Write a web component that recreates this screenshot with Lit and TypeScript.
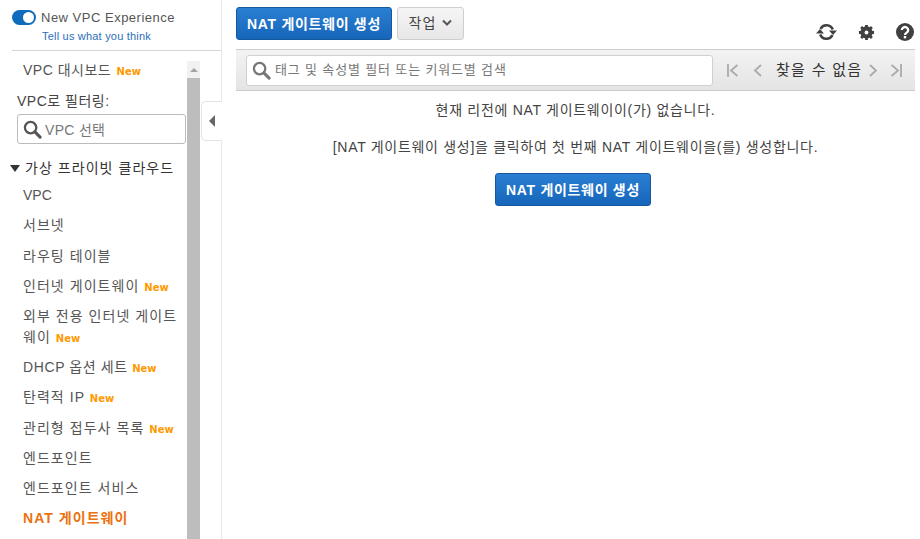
import { css, html, LitElement, nothing } from "lit";
import { customElement } from "lit/decorators.js";

interface NavItem {
  label: string;
  isNew?: boolean;
  kind?: "active" | "plain" | "tight";
}

const NAV_ITEMS: NavItem[] = [
  { label: "VPC", kind: "plain" },
  { label: "서브넷" },
  { label: "라우팅 테이블" },
  { label: "인터넷 게이트웨이", isNew: true },
  { label: "외부 전용 인터넷 게이트웨이", isNew: true },
  { label: "DHCP 옵션 세트", isNew: true, kind: "tight" },
  { label: "탄력적 IP", isNew: true },
  { label: "관리형 접두사 목록", isNew: true },
  { label: "엔드포인트" },
  { label: "엔드포인트 서비스" },
  { label: "NAT 게이트웨이", kind: "active" },
];

const searchIcon = (size: number) => html`<svg
  class="search-icon"
  width=${size}
  height=${size}
  viewBox="0 0 20 20"
  aria-hidden="true"
>
  <circle cx="8" cy="8" r="6" fill="none" stroke="currentColor" stroke-width="2.4" />
  <path d="M12.5 12.5 18 18" stroke="currentColor" stroke-width="3.2" stroke-linecap="round" />
</svg>`;

@customElement("app-root")
export class AppRoot extends LitElement {
  static styles = css`
    :host {
      display: block;
      height: 539px;
      overflow: hidden;
      background: #fff;
      color: #444;
      font-family: "Liberation Sans", "Noto Sans CJK KR", sans-serif;
      font-size: 14px;
    }

    .page {
      display: flex;
      height: 539px;
    }

    .sidebar {
      position: relative;
      flex: none;
      width: 222px;
      box-sizing: border-box;
      border-right: 1px solid #e6e6e6;
      padding-left: 12px;
    }

    .experience {
      height: 51px;
      box-sizing: border-box;
      border-bottom: 1px solid #d5d5d5;
      padding-top: 9px;
    }

    .experience-row {
      display: flex;
      align-items: center;
      gap: 5px;
      height: 17px;
      font-size: 13px;
      letter-spacing: 0.5px;
      color: #555;
    }

    .toggle {
      position: relative;
      flex: none;
      width: 24px;
      height: 15px;
      border-radius: 8px;
      background: #0f6cbd;
    }

    .toggle::after {
      content: "";
      position: absolute;
      right: 2px;
      top: 2px;
      width: 11px;
      height: 11px;
      border-radius: 50%;
      background: #fff;
    }

    .feedback {
      margin: 4px 0 0 30px;
      font-size: 11px;
      letter-spacing: 0.2px;
      color: #2a6ebb;
    }

    .nav-area {
      display: flex;
      height: 488px;
      padding-top: 10px;
      box-sizing: border-box;
    }

    .nav {
      flex: none;
      width: 175px;
    }

    .scrollbar {
      flex: none;
      width: 13px;
      background: #f1f1f1;
      display: flex;
      flex-direction: column;
    }

    .scroll-up {
      height: 17px;
      display: flex;
      align-items: center;
      justify-content: center;
    }

    .scroll-up::before {
      content: "";
      border-left: 4px solid transparent;
      border-right: 4px solid transparent;
      border-bottom: 4px solid #a3a3a3;
    }

    .scroll-thumb {
      flex: 1;
      background: #bdbdbd;
    }

    .dashboard {
      margin-left: 11px;
      height: 19px;
      line-height: 19px;
      letter-spacing: 0.5px;
      color: #555;
      white-space: nowrap;
    }

    .new {
      font-family: "DejaVu Sans", sans-serif;
      font-size: 10px;
      font-weight: 700;
      line-height: 0;
      letter-spacing: 0;
      color: #ff9900;
    }

    .dashboard .new {
      margin-left: 1px;
    }

    .filter-label {
      margin: 11px 0 0 5px;
      line-height: 20px;
      letter-spacing: 0.5px;
      color: #444;
    }

    .vpc-select {
      display: flex;
      align-items: center;
      gap: 3px;
      box-sizing: border-box;
      width: 169px;
      height: 30px;
      margin: 3px 0 0 5px;
      padding-left: 5px;
      border: 1px solid #bbb;
      border-radius: 3px;
      color: #777;
      letter-spacing: 0.3px;
    }

    .vpc-select .search-icon {
      color: #555;
    }

    .section-title {
      display: flex;
      align-items: center;
      gap: 5px;
      margin: 14px 0 0 -2px;
      line-height: 20px;
      letter-spacing: 1.05px;
      color: #333;
      white-space: nowrap;
    }

    .section-title::before {
      content: "";
      border-left: 5px solid transparent;
      border-right: 5px solid transparent;
      border-top: 7px solid #333;
    }

    ul {
      list-style: none;
      margin: 2px 0 0 11px;
      padding: 0;
    }

    li {
      line-height: 20.5px;
      padding: 5px 0 4.8px;
      letter-spacing: 1.05px;
      color: #555;
    }

    li.plain {
      letter-spacing: 0;
    }

    li.tight {
      letter-spacing: 0.6px;
    }

    li.active {
      color: #ec7211;
      font-weight: 700;
    }

    .collapse {
      position: absolute;
      right: -1px;
      top: 101px;
      width: 21px;
      height: 40px;
      box-sizing: border-box;
      border: 1px solid #e3e3e3;
      border-right: 1px solid #fff;
      border-radius: 5px 0 0 5px;
      background: #fff;
      display: flex;
      align-items: center;
      justify-content: center;
    }

    .collapse::before {
      content: "";
      border-top: 6px solid transparent;
      border-bottom: 6px solid transparent;
      border-right: 6px solid #666;
    }

    .main {
      flex: none;
      width: 679px;
      margin-left: 14px;
    }

    .top-bar {
      display: flex;
      align-items: flex-start;
      height: 49px;
      padding-top: 7px;
      box-sizing: border-box;
    }

    .primary {
      box-sizing: border-box;
      height: 33px;
      border: 1px solid #15589f;
      border-radius: 3px;
      background: linear-gradient(#2a7fd2, #1666ba);
      color: #fff;
      font: inherit;
      font-weight: 700;
      letter-spacing: 0.7px;
      padding: 0 0 2px;
      text-align: center;
    }

    .primary.top {
      width: 156px;
    }

    .actions {
      display: flex;
      align-items: center;
      justify-content: center;
      gap: 6px;
      box-sizing: border-box;
      width: 67px;
      height: 33px;
      margin-left: 5px;
      padding-bottom: 3px;
      border: 1px solid #cfcfcf;
      border-radius: 3px;
      background: linear-gradient(#f5f5f5, #e7e7e7);
      color: #444;
      letter-spacing: 1px;
    }

    .actions svg {
      color: #555;
    }

    .tools {
      display: flex;
      align-items: center;
      gap: 21px;
      margin-left: auto;
      margin-top: 16px;
      margin-right: 1px;
      color: #404040;
    }

    .filter-bar {
      display: flex;
      align-items: center;
      height: 42px;
      box-sizing: border-box;
      padding-left: 10px;
      border-top: 1px solid #ccc;
      border-bottom: 1px solid #ccc;
      background: linear-gradient(#f3f3f3, #e4e4e4);
    }

    .filter-input {
      display: flex;
      align-items: center;
      gap: 4px;
      flex: none;
      width: 467px;
      height: 31px;
      box-sizing: border-box;
      padding-left: 5px;
      border: 1px solid #d0d0d0;
      border-radius: 3px;
      background: #fff;
      color: #777;
      font-size: 13px;
      letter-spacing: 0.85px;
    }

    .filter-input span {
      margin-bottom: 3px;
    }

    .filter-input .search-icon {
      color: #777;
    }

    .pager {
      display: flex;
      align-items: center;
      margin-left: 14px;
      color: #aaa;
    }

    .pager svg {
      flex: none;
    }

    .pager .count {
      margin: 0 7px 3px 14px;
      color: #333;
      font-size: 15px;
      letter-spacing: 1.3px;
    }

    .pager .next {
      margin-right: 13px;
    }

    .pager .prev {
      margin-left: 15px;
    }

    .empty {
      display: flex;
      flex-direction: column;
      align-items: center;
      padding-top: 9px;
      color: #444;
      letter-spacing: 0.7px;
    }

    .empty p {
      margin: 0 0 17px;
      line-height: 20px;
    }

    .primary.center {
      width: 156px;
      margin: -1px 5px 0 0;
    }
  `;

  private renderNew(show?: boolean) {
    return show ? html` <span class="new">New</span>` : nothing;
  }

  render() {
    return html`<div class="page">
      <aside class="sidebar">
        <div class="experience">
          <div class="experience-row">
            <span class="toggle"></span>New VPC Experience
          </div>
          <div class="feedback">Tell us what you think</div>
        </div>
        <div class="nav-area">
          <nav class="nav">
            <div class="dashboard">VPC 대시보드 <span class="new">New</span></div>
            <div class="filter-label">VPC로 필터링:</div>
            <div class="vpc-select">${searchIcon(19)}<span>VPC 선택</span></div>
            <div class="section-title">가상 프라이빗 클라우드</div>
            <ul>
              ${NAV_ITEMS.map(
                (item) =>
                  html`<li class=${item.kind ?? ""}>
                    ${item.label}${this.renderNew(item.isNew)}
                  </li>`,
              )}
            </ul>
          </nav>
          <div class="scrollbar">
            <div class="scroll-up"></div>
            <div class="scroll-thumb"></div>
          </div>
        </div>
        <div class="collapse"></div>
      </aside>
      <main class="main">
        <div class="top-bar">
          <button class="primary top">NAT 게이트웨이 생성</button>
          <div class="actions">
            작업
            <svg width="10" height="7" viewBox="0 0 10 7" aria-hidden="true">
              <path d="M1 1.5 5 5.5 9 1.5" fill="none" stroke="currentColor" stroke-width="2" />
            </svg>
          </div>
          <div class="tools">
            <svg width="21" height="18" viewBox="0 0 21 18" aria-hidden="true">
              <path
                d="M4.500 5.800A6.800 6.800 0 0 1 16.800 6.500M16.500 12.200A6.800 6.800 0 0 1 4.200 11.500"
                fill="none"
                stroke="currentColor"
                stroke-width="2.600"
              />
              <path d="M13 7.500h8l-4 4.500zM0 10.500h8L4 6z" fill="currentColor" />
            </svg>
            <svg width="17" height="17" viewBox="0 0 18 18" aria-hidden="true">
              <circle cx="9" cy="9" r="4.500" fill="none" stroke="currentColor" stroke-width="4" />
              <path
                d="M9 1v16M1 9h16M3.300 3.300l11.400 11.400M14.700 3.300 3.300 14.700"
                stroke="currentColor"
                stroke-width="3"
              />
              <circle cx="9" cy="9" r="2" fill="#fff" />
            </svg>
            <svg width="18" height="18" viewBox="0 0 18 18" aria-hidden="true">
              <circle cx="9" cy="9" r="9" fill="currentColor" />
              <path
                d="M5.800 7a3.200 3 0 1 1 4.900 2.600C9.600 10.300 9 10.800 9 12"
                fill="none"
                stroke="#fff"
                stroke-width="2.300"
              />
              <rect x="7.800" y="13" width="2.400" height="2.400" fill="#fff" />
            </svg>
          </div>
        </div>
        <div class="filter-bar">
          <div class="filter-input">${searchIcon(19)}<span>태그 및 속성별 필터 또는 키워드별 검색</span></div>
          <div class="pager">
            <svg width="11" height="13" viewBox="0 0 11 13" aria-hidden="true">
              <path d="M1 0v13M10.500 1 4 6.500l6.500 5.500" fill="none" stroke="currentColor" stroke-width="1.800" />
            </svg>
            <svg class="prev" width="9" height="13" viewBox="0 0 9 13" aria-hidden="true">
              <path d="M8 1 2 6.500 8 12" fill="none" stroke="currentColor" stroke-width="1.800" />
            </svg>
            <span class="count">찾을 수 없음</span>
            <svg class="next" width="9" height="13" viewBox="0 0 9 13" aria-hidden="true">
              <path d="M1 1l6 5.500L1 12" fill="none" stroke="currentColor" stroke-width="1.800" />
            </svg>
            <svg width="11" height="13" viewBox="0 0 11 13" aria-hidden="true">
              <path d="M10 0v13M.5 1 7 6.500.5 12" fill="none" stroke="currentColor" stroke-width="1.800" />
            </svg>
          </div>
        </div>
        <div class="empty">
          <p>현재 리전에 NAT 게이트웨이이(가) 없습니다.</p>
          <p>[NAT 게이트웨이 생성]을 클릭하여 첫 번째 NAT 게이트웨이을(를) 생성합니다.</p>
          <button class="primary center">NAT 게이트웨이 생성</button>
        </div>
      </main>
    </div>`;
  }
}
